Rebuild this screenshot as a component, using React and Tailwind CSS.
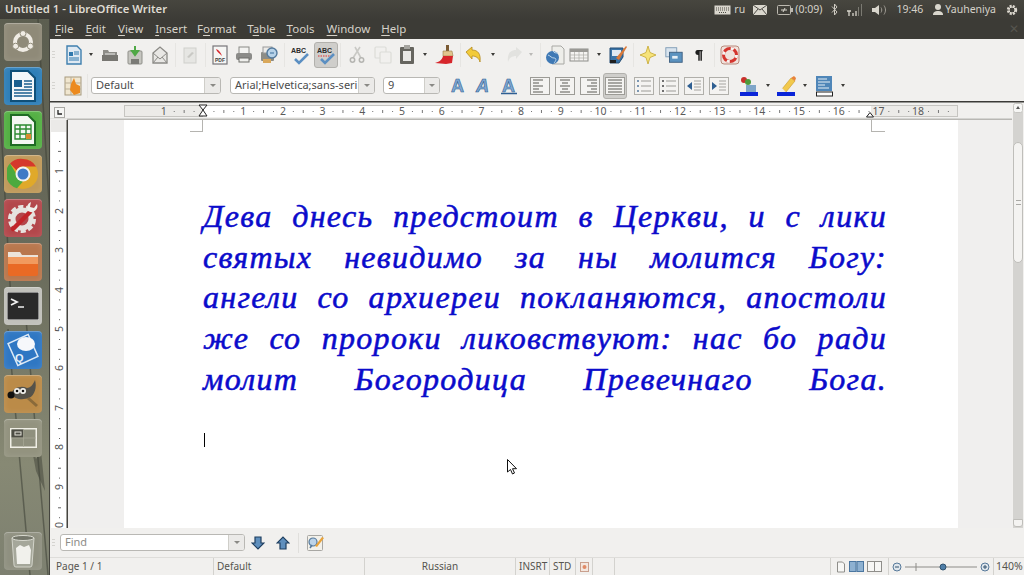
import React from "react";

const UI = "font-['Noto_Sans','Open_Sans',sans-serif]";

/* ================= TOOLBAR ICONS ================= */
const Svg = ({ children, s = 22, vb = 22 }) => (
  <svg width={s} height={s} viewBox={`0 0 ${vb} ${vb}`} fill="none">{children}</svg>
);

const DocNew = () => (
  <Svg>
    <path d="M4 2h10l4 4v14H4z" fill="#dfe9f2" stroke="#3f7fae" strokeWidth="1.4" />
    <rect x="6" y="8" width="4" height="4" fill="#2f78ad" />
    <path d="M11 8h5M11 10h5M6 14h10M6 16h10" stroke="#2f78ad" />
  </Svg>
);
const Open = () => (
  <Svg>
    <path d="M4 6h5l1 2h8v4H4z" fill="#8e8d88" />
    <path d="M3 11h16v6H3z" fill="#777671" />
    <path d="M6 10h10" stroke="#e8e8e6" />
  </Svg>
);
const Save = () => (
  <Svg>
    <rect x="4" y="7" width="14" height="13" rx="1" fill="#c6c6c0" stroke="#8f8f89" />
    <rect x="7" y="15" width="8" height="5" fill="#7b7b76" />
    <path d="M11 2v8M8 7l3 4 3-4z" stroke="#4fa845" strokeWidth="2" fill="#4fa845" />
  </Svg>
);
const Mail = () => (
  <Svg>
    <path d="M4 9l7-6 7 6v10H4z" fill="#e8e7e4" stroke="#8b8a86" strokeWidth="1.3" />
    <path d="M4 9l7 6 7-6M4 19l5-6M18 19l-5-6" stroke="#8b8a86" />
  </Svg>
);
const EditDoc = () => (
  <Svg>
    <rect x="5" y="4" width="12" height="15" fill="#e6e6e3" stroke="#cfcfcb" />
    <path d="M8 13l5-5 2 1-5 5z" fill="#c9c9c5" />
  </Svg>
);
const Pdf = () => (
  <Svg>
    <rect x="4" y="2" width="14" height="18" fill="#f6f6f4" stroke="#77767a" strokeWidth="1.2" />
    <path d="M7 5c3 1 5 4 6 7-3-3-5-4-6-7z" fill="#d8242a" />
    <text x="6" y="18" fontSize="5" fontWeight="700" fill="#444" fontFamily="Liberation Sans">PDF</text>
  </Svg>
);
const Print = () => (
  <Svg>
    <rect x="6" y="3" width="10" height="7" fill="#f3f3f1" stroke="#8a8a86" />
    <rect x="3" y="9" width="16" height="7" rx="2" fill="#8b8b88" />
    <rect x="6" y="14" width="10" height="4" fill="#efefec" stroke="#6f6f6b" />
  </Svg>
);
const Preview = () => (
  <Svg>
    <rect x="3" y="8" width="13" height="9" rx="1" fill="#8c8c86" />
    <rect x="5" y="3" width="9" height="6" fill="#ecebe8" stroke="#999" />
    <rect x="5" y="15" width="8" height="4" fill="#d9a85b" />
    <circle cx="14" cy="9" r="5" fill="#b7d2e8" stroke="#53799c" strokeWidth="1.4" />
    <path d="M12 9h4" stroke="#3a6f9d" />
  </Svg>
);
const Spell = ({ red }) => (
  <Svg>
    <text x="2" y="9" fontSize="7" fontWeight="700" fill="#2b2b2b" fontFamily="Liberation Sans">ABC</text>
    {red && <path d="M3 12h15" stroke="#d33" strokeWidth="1.2" strokeDasharray="1.5 1" />}
    <path d="M6 15l4 4 9-9" stroke="#5b8fc2" strokeWidth="2.6" />
  </Svg>
);
const Cut = () => (
  <Svg>
    <path d="M7 14L14 3M15 14L9 3" stroke="#c9c9c5" strokeWidth="1.6" />
    <circle cx="6.500" cy="16" r="2.200" stroke="#b5b5b1" strokeWidth="1.500" />
    <circle cx="15.500" cy="16" r="2.200" stroke="#b5b5b1" strokeWidth="1.500" />
  </Svg>
);
const Copy = () => (
  <Svg>
    <rect x="3" y="3" width="11" height="11" rx="1" stroke="#dcdcd8" strokeWidth="1.2" fill="#f1f0ee" />
    <rect x="8" y="8" width="11" height="11" rx="1" stroke="#dcdcd8" strokeWidth="1.2" fill="#f1f0ee" />
  </Svg>
);
const Paste = () => (
  <Svg>
    <rect x="4" y="3" width="14" height="17" rx="1" fill="#66655f" />
    <rect x="7" y="7" width="8" height="10" fill="#e9e8e5" />
    <rect x="8" y="1" width="6" height="4" fill="#a5a49f" />
  </Svg>
);
const Brush = () => (
  <Svg>
    <rect x="12" y="1" width="3" height="7" fill="#7a5a33" />
    <path d="M9 7h9l1 5H9z" fill="#e2c58e" stroke="#9b7d48" strokeWidth=".6" />
    <path d="M9 12h10l-1 7-6 1-11-1c4-1 7-3 8-7z" fill="#d7262b" />
  </Svg>
);
const Undo = () => (
  <Svg>
    <path d="M3 8l6-5v3c6 0 9 4 8 12-1-4-4-6-8-6v3z" fill="#f2cb3a" stroke="#b58a1d" strokeWidth=".8" />
  </Svg>
);
const Redo = () => (
  <Svg>
    <path d="M19 8l-6-5v3C7 6 4 10 5 18c1-4 4-6 8-6v3z" fill="#e2e2df" />
  </Svg>
);
const Link = () => (
  <Svg>
    <path d="M8 2h9l3 3v15H8z" fill="#eeeeea" stroke="#a8a8a4" />
    <circle cx="8.5" cy="13.5" r="6.5" fill="#3f79b5" />
    <path d="M4 11c3 1 3 3 6 3s2 3 0 5M9 7c1 2 3 2 5 2" stroke="#bcd5ea" />
  </Svg>
);
const Table = () => (
  <Svg>
    <rect x="2" y="5" width="18" height="12" fill="#f4f3f1" stroke="#8e8d89" />
    <rect x="2" y="5" width="18" height="3" fill="#9a9995" />
    <path d="M6.500 8v9M11 8v9M15.500 8v9M2 11h18M2 14h18" stroke="#adaca8" strokeWidth=".7" />
  </Svg>
);
const Draw = () => (
  <Svg>
    <path d="M3 4h13v9l-4 6H3z" fill="#3a74a8" stroke="#244d74" />
    <path d="M5 6h9v6H5z" fill="#dfe9f2" />
    <path d="M9 14L19 2l1 1-8 13z" fill="#d9793a" />
    <path d="M3 16h6v3H3z" fill="#1f1f1f" />
  </Svg>
);
const Nav = () => (
  <Svg>
    <path d="M11 2l2 6.500L19 11l-6 2.500L11 20l-2-6.500L3 11l6-2.500z" fill="#f6e37a" stroke="#c4a62e" strokeWidth=".8" />
  </Svg>
);
const Gallery = () => (
  <Svg s={20} vb={22}>
    <rect x="2" y="3" width="12" height="10" fill="#d9e4ee" stroke="#7d9ab5" />
    <rect x="6" y="8" width="14" height="11" fill="#5b92bf" stroke="#3d5f80" />
    <rect x="9" y="12" width="6" height="3" fill="#e8f0f6" />
  </Svg>
);
const Pilcrow = () => (
  <Svg s={16} vb={22}>
    <path d="M9 4h7v2h-1v13h-2V6h-1v13h-2v-8c-3 0-4-2-4-3.500S7 4 9 4z" fill="#1e1e1e" />
  </Svg>
);
const Help = () => (
  <Svg>
    <rect x="2" y="2" width="18" height="18" rx="3" fill="#f0e2dc" stroke="#b98a7c" />
    <circle cx="11" cy="11" r="6.500" stroke="#d4352e" strokeWidth="3" />
    <circle cx="11" cy="11" r="6.500" stroke="#f5f5f3" strokeWidth="3" strokeDasharray="3 7.200" />
  </Svg>
);
const StyleIcon = () => (
  <Svg>
    <rect x="3" y="2" width="16" height="18" fill="#f0e6cf" stroke="#a79a7f" />
    <path d="M3 8h16M3 14h16M9 2v18" stroke="#b9ad95" />
    <path d="M9 9l3-6 2 6 4 2v7l-6 2-4-5z" fill="#ec8a1e" />
  </Svg>
);
const LetterA = ({ kind }) => (
  <svg width="20" height="18" viewBox="0 0 20 18">
    <text
      x={kind === "u" ? 3 : 2}
      y="14.500"
      fontSize="18"
      fontWeight="700"
      fontStyle={kind === "i" ? "italic" : "normal"}
      fontFamily="Liberation Sans"
      fill="#7fa8d2"
      stroke="#2f5f92"
      strokeWidth=".6"
    >
      A
    </text>
    {kind === "u" && <path d="M2 16.500h16" stroke="#2f5f92" strokeWidth="1.500" />}
  </svg>
);
const Align = ({ k }) => {
  const rows = [5, 8, 11, 14, 17];
  const line = (i) => {
    if (k === "j") return [4, 18];
    const w = i % 2 ? 6 : 10;
    if (k === "l") return [4, 4 + w];
    if (k === "r") return [18 - w, 18];
    return [11 - w / 2, 11 + w / 2];
  };
  return (
    <Svg>
      <rect x="1.500" y="2.500" width="19" height="17" fill="#f4f3f1" stroke="#9c9b96" />
      {rows.map((y, i) => {
        const [a, b] = line(i);
        return <path key={y} d={`M${a} ${y}H${b}`} stroke="#7d7c78" strokeWidth="1.300" />;
      })}
    </Svg>
  );
};
const ListIcon = ({ k }) => (
  <Svg>
    <rect x="1.500" y="2.500" width="19" height="17" fill="#f4f3f1" stroke="#b0afaa" />
    {[6, 11, 16].map((y) => (
      <g key={y}>
        <path d={`M4 ${y}h2`} stroke={k === "n" ? "#55799c" : "#444"} strokeWidth="1.400" />
        <path d={`M8 ${y}h10`} stroke="#9c9b97" />
      </g>
    ))}
  </Svg>
);
const Indent = ({ k }) => (
  <Svg>
    <rect x="1.500" y="2.500" width="19" height="17" fill="#f4f3f1" stroke="#b0afaa" />
    <path d={k === "in" ? "M4 7l5 4-5 4z" : "M9 7l-5 4 5 4z"} fill="#2f5f92" />
    <path d="M11 6h7M11 9h7M11 12h7M11 15h7" stroke="#a5a4a0" />
  </Svg>
);
const CharColor = () => (
  <Svg>
    <circle cx="6" cy="5" r="3" fill="#c9302c" />
    <circle cx="10" cy="7" r="3" fill="#4e9a3c" />
    <path d="M8 10h10v7H8z" fill="#7fa6c9" />
    <rect x="2" y="17" width="18" height="4" fill="#0a25d8" />
  </Svg>
);
const Highlight = () => (
  <Svg>
    <path d="M7 14L16 3l4 3-9 11z" fill="#f2c94c" stroke="#c79a2a" strokeWidth=".6" />
    <path d="M16 3l4 3 1-3-2-2z" fill="#e8833a" />
    <path d="M4 16l3-3 4 4z" fill="#eee" />
    <rect x="2" y="17" width="18" height="4" fill="#0a25d8" />
  </Svg>
);
const ParaBg = () => (
  <Svg>
    <rect x="3" y="1" width="16" height="15" fill="#4f86b8" />
    <path d="M5 4h9M5 7h12M5 10h7M5 13h11" stroke="#e8f0f6" />
    <rect x="3.500" y="17" width="16" height="4" fill="#fff" stroke="#222" />
  </Svg>
);

const Caret = () => (
  <span className="w-2 h-4 flex items-center justify-center">
    <span className="w-0 h-0 border-x-[2.5px] border-t-[3px] border-x-transparent border-t-[#3c3b37]" />
  </span>
);
const Slot = ({ ml = "", active, children }) => (
  <span
    className={`${ml} w-6 h-[26px] flex items-center justify-center shrink-0 rounded-[3px] ${
      active ? "bg-[#cfcecb] border border-[#b2b1ad]" : ""
    }`}
  >
    {children}
  </span>
);
const Sep = ({ ml = "" }) => <span className={`${ml} w-px h-6 bg-[#e6e5e2] shrink-0`} />;
const Grip = () => (
  <span className="ml-[2px] w-[3px] flex flex-col gap-[2px] shrink-0">
    <span className="h-px bg-[#d5d4d0]" />
    <span className="h-px bg-[#d5d4d0]" />
    <span className="h-px bg-[#d5d4d0]" />
  </span>
);

const Combo = ({ text, className, textClass = "text-[#4c4c4c]", btn = "w-4" }) => (
  <div className={`${className} h-[17px] flex bg-white border border-[#b9b8b4] rounded-[3px] overflow-hidden shrink-0`}>
    <span className={`flex-1 pl-1 text-[11px] leading-[14px] whitespace-nowrap ${textClass}`}>{text}</span>
    <span className={`${btn} bg-[#ebeae8] border-l border-[#cfcec9] flex items-center justify-center shrink-0`}>
      <span className="w-0 h-0 border-x-[3px] border-t-[3px] border-x-transparent border-t-[#8a8985]" />
    </span>
  </div>
);

function ToolbarOne() {
  return (
    <div className="h-[31px] flex items-center bg-[#f1f0ee]">
      <Grip />
      <Slot ml="ml-[7px]"><DocNew /></Slot>
      <span className="ml-px"><Caret /></span>
      <Slot ml="ml-[3px]"><Open /></Slot>
      <Slot ml="ml-px"><Save /></Slot>
      <Slot ml="ml-px"><Mail /></Slot>
      <Sep ml="ml-[3px]" />
      <Slot ml="ml-[2px]"><EditDoc /></Slot>
      <Sep ml="ml-[3px]" />
      <Slot ml="ml-[2px]"><Pdf /></Slot>
      <Slot><Print /></Slot>
      <Slot ml="ml-px"><Preview /></Slot>
      <Sep ml="ml-[3px]" />
      <Slot ml="ml-[3px]"><Spell /></Slot>
      <Slot ml="ml-[2px]" active><Spell red /></Slot>
      <Sep ml="ml-[2px]" />
      <Slot ml="ml-[4px]"><Cut /></Slot>
      <Slot ml="ml-[2px]"><Copy /></Slot>
      <Slot><Paste /></Slot>
      <span className="ml-[2px]"><Caret /></span>
      <Slot ml="ml-[4px]"><Brush /></Slot>
      <Sep ml="ml-[3px]" />
      <Slot ml="ml-px"><Undo /></Slot>
      <span className="ml-[3px]"><Caret /></span>
      <Slot ml="ml-[5px]"><Redo /></Slot>
      <span className="ml-px opacity-30"><Caret /></span>
      <Sep ml="ml-[5px]" />
      <Slot ml="ml-[2px]"><Link /></Slot>
      <Slot><Table /></Slot>
      <span className="ml-[4px]"><Caret /></span>
      <Slot ml="ml-[3px]"><Draw /></Slot>
      <Sep ml="ml-[3px]" />
      <Slot ml="ml-[2px]"><Nav /></Slot>
      <Slot ml="ml-[2px]"><Gallery /></Slot>
      <Slot ml="ml-px"><Pilcrow /></Slot>
      <Sep ml="ml-[3px]" />
      <Slot ml="ml-[3px]"><Help /></Slot>
    </div>
  );
}

function ToolbarTwo() {
  return (
    <div className="h-[31px] flex items-center bg-[#f1f0ee]">
      <Grip />
      <Slot ml="ml-[6px]"><StyleIcon /></Slot>
      <Sep ml="ml-[2px]" />
      <Combo text="Default" className="ml-[3px] w-[130px]" />
      <Combo text="Arial;Helvetica;sans-seri" className="ml-[9px] w-[145px]" />
      <Combo text="9" className="ml-[8px] w-[57px]" btn="w-[15px]" />
      <Slot ml="ml-[7px]"><LetterA /></Slot>
      <Slot ml="ml-px"><LetterA kind="i" /></Slot>
      <Slot ml="ml-px"><LetterA kind="u" /></Slot>
      <Slot ml="ml-[7px]"><Align k="l" /></Slot>
      <Slot ml="ml-px"><Align k="c" /></Slot>
      <Slot ml="ml-px"><Align k="r" /></Slot>
      <Slot ml="ml-px" active><Align k="j" /></Slot>
      <Slot ml="ml-[5px]"><ListIcon k="n" /></Slot>
      <Slot ml="ml-px"><ListIcon /></Slot>
      <Slot ml="ml-px"><Indent k="out" /></Slot>
      <Slot ml="ml-px"><Indent k="in" /></Slot>
      <Slot ml="ml-[6px]"><CharColor /></Slot>
      <span className="ml-[3px]"><Caret /></span>
      <Slot ml="ml-[2px]"><Highlight /></Slot>
      <span className="ml-[3px]"><Caret /></span>
      <Slot ml="ml-[3px]"><ParaBg /></Slot>
      <span className="ml-[3px]"><Caret /></span>
    </div>
  );
}

/* ================= RULERS ================= */
const HRuler = () => {
  const ox = 203.5 - 50;
  const step = 39.7;
  const marks = [];
  for (let n = -2; n <= 19; n++) {
    const x = ox + n * step;
    if (x < 78 || x > 905) continue;
    [0.25, 0.5, 0.75].forEach((f) => {
      const tx = x + f * step;
      if (tx > 905) return;
      marks.push(
        <rect key={`${n}${f}`} x={tx} y={f === 0.5 ? 9 : 10} width="1" height={f === 0.5 ? 3 : 1} fill="#777" />
      );
    });
    if (n !== 0) {
      marks.push(<text key={n} x={x} y="14" fontSize="10.500" textAnchor="middle" fill="#5a5a5a" fontFamily="Noto Sans">{Math.abs(n)}</text>);
    }
  }
  return (
    <svg width="974" height="19" className="block">
      <rect width="974" height="19" fill="#f1f0ee" />
      <rect x="0" y="0" width="974" height="1.500" fill="#3b3a37" />
      <rect x="4.500" y="6.500" width="10" height="10" fill="#f6f6f4" stroke="#a9a8a4" />
      <path d="M8 9v4h4" stroke="#222" strokeWidth="1.300" fill="none" />
      <rect x="74.500" y="4.500" width="833" height="11" fill="#ecebe8" stroke="#c6c5c1" />
      <rect x="153" y="5" width="668" height="11" fill="#fff" />
      {marks}
      <path d="M149 4h8l-4 5 4 6h-8l4-6z" fill="#fff" stroke="#222" />
      <path d="M816.500 16h7l-3.500-4.500z" fill="#fff" stroke="#222" />
      <rect x="0" y="17.500" width="962" height="1.500" fill="#b8b7b3" />
      <rect x="0" y="17.500" width="17" height="1.500" fill="#f1f0ee" />
      <rect x="963" y="11" width="10" height="8" fill="#d4d3d0" />
      <rect x="963.500" y="2.500" width="9" height="9" rx="2" fill="#f6f6f4" stroke="#c7c6c2" />
      <path d="M966 8l2-3 2 3z" fill="#555" />
    </svg>
  );
};

const VRuler = () => {
  const nums = [
    [1, 51],
    [2, 91],
    [3, 130],
    [4, 170],
    [5, 209],
    [6, 248],
    [7, 288],
    [8, 327],
    [9, 367],
    [0, 405],
  ];
  const ticks = [];
  for (let y = 21; y < 408; y += 9.9) ticks.push(y);
  return (
    <svg width="18" height="408" className="block shrink-0">
      <rect x="1" width="15.500" height="408" fill="#fff" />
      <rect x="1" width="15.500" height="12" fill="#ebeae8" />
      <rect x="16.500" width="1.500" height="408" fill="#45443f" />
      {ticks.map((y, i) => (
        <rect key={i} x={i % 4 === 1 ? 8 : 9} y={y} width={i % 4 === 1 ? 3 : 1} height="1" fill="#666" />
      ))}
      {nums.map(([n, y]) => (
        <g key={y}>
          <rect x="3" y={y - 5} width="12" height="10" fill="#fff" />
          <text transform={`translate(13 ${y}) rotate(-90)`} fontSize="10.500" textAnchor="middle" fill="#555" fontFamily="Noto Sans">{n}</text>
        </g>
      ))}
    </svg>
  );
};

const lines = [
  "Дева днесь предстоит в Церкви, и с лики",
  "святых невидимо за ны молится Богу:",
  "ангели со архиереи покланяются, апостоли",
  "же со пророки ликовствуют: нас бо ради",
  "молит Богородица Превечнаго Бога.",
];

function Page() {
  return (
    <div className="ml-[56px] w-[834px] h-full bg-white flex flex-col relative">
      <div className="flex justify-between pl-[66px] pr-[73px]">
        <span className="w-[13px] h-[12px] border-r border-b border-[#b5b4b0]" />
        <span className="w-[14px] h-[12px] border-l border-b border-[#b5b4b0]" />
      </div>
      <div className="pl-[79px] w-[763px] mt-[64px] font-['Liberation_Serif',serif] italic text-[#0b0bcb] text-[32px] tracking-[1.3px] leading-[40.7px] [-webkit-text-stroke:0.55px_#0b0bcb]">
        {lines.map((l) => (
          <div key={l} className="text-justify [text-align-last:justify] whitespace-normal">{l}</div>
        ))}
      </div>
      <div className="ml-[80px] mt-[33px] w-px h-[14px] bg-black" />
    </div>
  );
}

/* ================= LAUNCHER ================= */
const Tile = ({ bg, children }) => (
  <div className={`w-[38px] h-[38px] rounded-[4px] flex items-center justify-center shrink-0 shadow-[inset_0_1px_0_rgba(255,255,255,0.25),inset_0_0_6px_rgba(255,255,255,0.12)] ${bg}`}>{children}</div>
);

const launcherIcons = [
  {
    bg: "bg-[#8f8a78]",
    el: (
      <svg width="24" height="24" viewBox="0 0 24 24">
        <circle cx="12" cy="12" r="8" fill="none" stroke="#f0ece4" strokeWidth="4" />
        <circle cx="12" cy="3.500" r="3" fill="#f0ece4" stroke="#8f8a78" />
        <circle cx="4.600" cy="16.200" r="3" fill="#f0ece4" stroke="#8f8a78" />
        <circle cx="19.400" cy="16.200" r="3" fill="#f0ece4" stroke="#8f8a78" />
      </svg>
    ),
  },
  {
    bg: "bg-[#2f7fb8]",
    el: (
      <svg width="30" height="32" viewBox="0 0 30 32">
        <path d="M3 1h17l7 7v23H3z" fill="#f4f7f9" stroke="#0f4f78" strokeWidth="2" />
        <rect x="6" y="10" width="8" height="7" fill="#1a5f8f" />
        <path d="M16 11h8M16 14h8M16 17h8M6 20h18M6 23h18M6 26h18" stroke="#1a5f8f" strokeWidth="1.500" />
      </svg>
    ),
  },
  {
    bg: "bg-[#54b044]",
    el: (
      <svg width="30" height="32" viewBox="0 0 30 32">
        <path d="M3 1h17l7 7v23H3z" fill="#f4f7f2" stroke="#1f6b24" strokeWidth="2" />
        <path d="M7 11h16v14H7zM7 15h16M7 20h16M12 11v14M18 11v14" stroke="#2c8a32" strokeWidth="1.400" fill="none" />
        <rect x="18" y="20" width="5" height="5" fill="#d98b2e" />
      </svg>
    ),
  },
  {
    bg: "bg-[#c09a5a]",
    el: (
      <svg width="32" height="32" viewBox="0 0 32 32">
        <circle cx="16" cy="16" r="15" fill="#e0a92a" />
        <path d="M16 1a15 15 0 0 1 13 7.500H16a7.500 7.500 0 0 0-6.500 3.800L3 5.500A15 15 0 0 1 16 1z" fill="#d5382c" />
        <path d="M3 5.500l6.500 10.800a7.500 7.500 0 0 0 6.500 7.200L10 30.200A15 15 0 0 1 3 5.500z" fill="#4caa3e" />
        <circle cx="16" cy="16" r="7.500" fill="#f2f2f2" />
        <circle cx="16" cy="16" r="5.500" fill="#3f79c6" />
      </svg>
    ),
  },
  {
    bg: "bg-[#b3474b]",
    el: (
      <svg width="34" height="34" viewBox="0 0 34 34">
        <circle cx="16" cy="18" r="12" fill="none" stroke="#e6e3df" strokeWidth="4" strokeDasharray="5 2.500" />
        <circle cx="16" cy="18" r="9" fill="none" stroke="#e6e3df" strokeWidth="5" />
        <path d="M7 28L24 11" stroke="#c0262a" strokeWidth="4.500" strokeLinecap="round" />
        <path d="M22 10a6 6 0 0 0 9-7l-3 4-4-1 1-5a6 6 0 0 0-3 9z" fill="#eeeeea" />
      </svg>
    ),
  },
  {
    bg: "bg-[#b9774d]",
    el: (
      <svg width="34" height="30" viewBox="0 0 34 30">
        <path d="M2 5h12l2 3h16v4H2z" fill="#ece4da" />
        <path d="M2 10h30v17a2 2 0 0 1-2 2H4a2 2 0 0 1-2-2z" fill="#e96a25" />
        <path d="M2 10h30v7H2z" fill="#f19a5e" />
      </svg>
    ),
  },
  {
    bg: "bg-[#c0c0ba]",
    el: (
      <svg width="32" height="28" viewBox="0 0 32 28">
        <rect width="32" height="28" rx="1" fill="#2a2a2a" stroke="#eee" />
        <path d="M4 7l6 3-6 3" stroke="#f1f1f1" strokeWidth="1.800" fill="none" />
        <path d="M11 15h6" stroke="#f1f1f1" strokeWidth="1.500" />
      </svg>
    ),
  },
  {
    bg: "bg-[#2f77c3]",
    el: (
      <svg width="34" height="34" viewBox="0 0 34 34">
        <rect x="6" y="5" width="22" height="24" transform="rotate(-24 17 17)" fill="none" stroke="#dce9f6" strokeWidth="1.500" />
        <ellipse cx="20" cy="11" rx="9" ry="7" fill="#f6f8fb" />
        <text x="9" y="29" fontSize="11" fontWeight="700" fill="#e8f0f8" fontFamily="Liberation Sans">Q</text>
      </svg>
    ),
  },
  {
    bg: "bg-[#bb8b48]",
    el: (
      <svg width="34" height="32" viewBox="0 0 34 32">
        <path d="M5 16c2-6 10-9 16-6 3 0 6-3 8-8 2 7 0 15-6 18-6 2-14 2-18-4z" fill="#55524a" />
        <circle cx="5" cy="17" r="3.500" fill="#111" />
        <circle cx="11" cy="13" r="3" fill="#f2f2ee" />
        <circle cx="17" cy="13" r="3" fill="#f2f2ee" />
        <circle cx="11" cy="13" r="1.300" fill="#111" />
        <circle cx="17" cy="13" r="1.300" fill="#111" />
        <path d="M22 20l9 8" stroke="#8a6a3a" strokeWidth="3" />
      </svg>
    ),
  },
  {
    bg: "bg-[#93937f]",
    el: (
      <svg width="27" height="20" viewBox="0 0 27 20">
        <rect x=".75" y=".75" width="25.500" height="18.500" fill="#8f907e" stroke="#f0efe6" strokeWidth="1.500" />
        <rect x="1.500" y="1.500" width="12" height="8" fill="#4d4d44" />
        <rect x="5" y="4" width="6" height="3" fill="none" stroke="#e5e4da" />
        <path d="M13.500 10v9M13.500 1v9M1 10h25" stroke="#a9aa98" strokeWidth=".7" />
      </svg>
    ),
  },
];

function Launcher() {
  return (
    <div className="w-[50px] shrink-0 relative bg-[linear-gradient(180deg,#5c5e50_0%,#6a6c5c_45%,#878974_80%,#7d8070_100%)] border-r border-[#44443e]">
      {/* wallpaper streaks */}
      <svg className="absolute inset-0" width="50" height="556">
        <path d="M38 0L50 200M0 90L12 300M8 310L30 556M26 300L48 556" stroke="#3c3f35" strokeWidth="1.500" opacity=".55" />
        <path d="M30 420l6 20 5-8 4 40-9-20z" fill="#3f4238" opacity=".5" />
      </svg>
      <div className="relative h-full flex flex-col items-center pt-[4px] pb-[5px] gap-[6px] pr-[3px]">
        {launcherIcons.map((it, i) => (
          <Tile key={i} bg={it.bg}>{it.el}</Tile>
        ))}
        <div className="mt-auto">
          <Tile bg="bg-[#8f9080]">
            <svg width="26" height="34" viewBox="0 0 26 34">
              <path d="M2 4h22l-2 27a2 2 0 0 1-2 2H6a2 2 0 0 1-2-2z" fill="#a5a79a" stroke="#d3d4ca" />
              <ellipse cx="13" cy="4" rx="11" ry="2.500" fill="#74766a" stroke="#d8d9cf" />
              <path d="M6 14l4-3 4 2 5-2 2 5-1 14H7z" fill="#f1f1ec" />
            </svg>
          </Tile>
        </div>
      </div>
    </div>
  );
}

/* ================= TOP PANEL ================= */
function TopBar() {
  return (
    <div className={`${UI} h-[19px] flex items-center pl-[5px] bg-[linear-gradient(180deg,#47463f,#3c3b36)] text-[#dfdbd2] shrink-0`}>
      <span className="text-[11.3px] font-semibold whitespace-nowrap">Untitled 1 - LibreOffice Writer</span>
      <div className="ml-auto flex items-center text-[10.5px] text-[#d6d2c9] whitespace-nowrap">
        <svg width="17" height="10" viewBox="0 0 17 10"><rect x=".5" y=".5" width="16" height="9" fill="#d9d6cd" /><path d="M2 3h13M2 5h13M5 7.500h7" stroke="#4c4b45" strokeDasharray="1 1" /></svg>
        <span className="ml-[3px] w-[19px]">ru</span>
        <svg width="14" height="10" viewBox="0 0 14 10"><rect width="14" height="10" fill="#d9d6cd" /><path d="M0 0l7 5 7-5M0 10l5-6M14 10L9 4" stroke="#4c4b45" fill="none" /></svg>
        <svg className="ml-[10px]" width="16" height="10" viewBox="0 0 16 10"><rect x=".5" y=".5" width="13" height="9" rx="1" fill="none" stroke="#bdb9b0" /><rect x="14" y="3" width="2" height="4" fill="#bdb9b0" /><path d="M4 5h6M8 3l-2 4" stroke="#d9d6cd" /></svg>
        <span className="ml-[2px]">(0:09)</span>
        <svg className="ml-[8px]" width="7" height="13" viewBox="0 0 7 13"><path d="M1 3.500l5 5.500-2.500 3V1L6 4 1 9.500" stroke="#cfcbc2" fill="none" /></svg>
        <svg className="ml-[9px]" width="15" height="12" viewBox="0 0 15 12"><path d="M0 7h4M2 7v5M6 12V9M9 12V7" stroke="#d9d6cd" strokeWidth="1.300" /><path d="M11.500 12V3M14.500 12V0" stroke="#7b7a72" /></svg>
        <svg className="ml-[10px]" width="15" height="12" viewBox="0 0 15 12"><path d="M0 4h3l4-3v10L3 8H0z" fill="#d9d6cd" /><path d="M9 3.500c1 1.500 1 3.500 0 5M12 1.500c2 3 2 6 0 9" stroke="#9e9b93" fill="none" /></svg>
        <span className="ml-[10px]">19:46</span>
        <svg className="ml-[10px]" width="10" height="11" viewBox="0 0 10 11"><circle cx="5" cy="3" r="3" fill="#d9d6cd" /><path d="M0 11c0-3 2-4 5-4s5 1 5 4z" fill="#d9d6cd" /></svg>
        <span className="ml-[2px]">Yauheniya</span>
        <svg className="ml-[10px] mr-[6px]" width="12" height="12" viewBox="0 0 12 12"><circle cx="6" cy="6" r="4" fill="none" stroke="#dcd8cf" strokeWidth="2.400" strokeDasharray="2 1.200" /><circle cx="6" cy="6" r="3" fill="none" stroke="#dcd8cf" /></svg>
      </div>
    </div>
  );
}

const menu = [
  ["", "F", "ile", "ml-[5px]"],
  ["", "E", "dit", "ml-[12px]"],
  ["", "V", "iew", "ml-[12px]"],
  ["", "I", "nsert", "ml-[12px]"],
  ["F", "o", "rmat", "ml-[10px]"],
  ["T", "a", "ble", "ml-[11px]"],
  ["", "T", "ools", "ml-[11px]"],
  ["", "W", "indow", "ml-[12px]"],
  ["", "H", "elp", "ml-[11px]"],
];

function MenuBar() {
  return (
    <div className="h-[20px] flex items-center pb-px bg-[#3c3b36] text-[#d6d2c9] text-[11.5px]">
      {menu.map(([a, u, b, ml]) => (
        <span key={u + b} className={ml}>
          {a}<u className="underline-offset-2">{u}</u>{b}
        </span>
      ))}
      <span className="ml-auto mr-[5px] text-[12px] leading-none text-[#56554f]">✕</span>
    </div>
  );
}

/* ================= FIND + STATUS ================= */
function FindBar() {
  return (
    <div className="h-[29px] flex items-center bg-[#f1f0ee]">
      <Grip />
      <Combo text="Find" textClass="text-[#8d8c88]" className="ml-[5px] w-[185px]" btn="w-[16px]" />
      <svg className="ml-[6px]" width="14" height="14" viewBox="0 0 14 14"><path d="M4 1h6v6h3l-6 6-6-6h3z" fill="#5f8fbd" stroke="#1f3f60" strokeWidth="1.200" /></svg>
      <svg className="ml-[11px]" width="14" height="14" viewBox="0 0 14 14"><path d="M4 13h6V7h3L7 1 1 7h3z" fill="#5f8fbd" stroke="#1f3f60" strokeWidth="1.200" /></svg>
      <span className="ml-[8px] w-px h-5 bg-[#e0dfdc]" />
      <svg className="ml-[7px]" width="18" height="18" viewBox="0 0 18 18">
        <rect x="1.500" y="1.500" width="15" height="15" rx="1" fill="#f3f1ea" stroke="#a8a7a3" />
        <circle cx="7" cy="8" r="4" fill="#bcd3e8" stroke="#55799c" strokeWidth="1.200" />
        <path d="M4 14l2-3" stroke="#55799c" strokeWidth="1.500" />
        <path d="M9 12l7-9 2 1-7 9z" fill="#e9a33a" />
      </svg>
    </div>
  );
}

const SBox = ({ className, children }) => (
  <div className={`${className} h-full flex items-center border-r border-[#d3d2ce] shrink-0 whitespace-nowrap`}>{children}</div>
);

function StatusBar() {
  return (
    <div className="h-[18px] flex bg-[#f1f0ee] text-[10px] text-[#55544f] border-t border-[#dedddA] overflow-hidden">
      <SBox className="w-[164px] pl-[6px]">Page 1 / 1</SBox>
      <SBox className="w-[151px] pl-[3px]">Default</SBox>
      <SBox className="w-[151px] justify-center">Russian</SBox>
      <SBox className="w-[34px] pl-[3px]">INSRT</SBox>
      <SBox className="w-[26px] pl-[3px]">STD</SBox>
      <SBox className="w-[17px] justify-center">
        <svg width="9" height="10" viewBox="0 0 9 10"><rect x=".5" y=".5" width="8" height="9" fill="#f4e7df" stroke="#c9a08e" /><circle cx="4.500" cy="5" r="2" fill="#e08a66" /></svg>
      </SBox>
      <SBox className="w-[22px]" />
      <SBox className="w-[216px]" />
      <SBox className="w-[58px] pl-[5px] gap-[3px]">
        <svg width="10" height="12" viewBox="0 0 10 12"><path d="M1.500 1h5l2 2v8h-7z" fill="#f7f7f5" stroke="#8f8e8a" /></svg>
        <svg width="15" height="11" viewBox="0 0 15 11"><rect x=".5" y=".5" width="6.500" height="10" fill="#8eb1d1" stroke="#4b76a0" /><rect x="8" y=".5" width="6.500" height="10" fill="#8eb1d1" stroke="#4b76a0" /></svg>
        <svg width="15" height="11" viewBox="0 0 15 11"><rect x=".5" y=".5" width="7" height="10" fill="#f7f7f5" stroke="#8f8e8a" /><rect x="7.500" y=".5" width="7" height="10" fill="#f7f7f5" stroke="#8f8e8a" /></svg>
      </SBox>
      <SBox className="w-[105px] pl-[2px]">
        <svg width="102" height="14" viewBox="0 0 102 14">
          <circle cx="6" cy="7" r="4" fill="#dfe6ec" stroke="#57799a" />
          <path d="M4 7h4" stroke="#33536f" />
          <path d="M14 7h72" stroke="#8d8c88" />
          <path d="M25 3v8" stroke="#8d8c88" />
          <circle cx="52" cy="7" r="3" fill="#4e7ea8" stroke="#2f526f" />
          <circle cx="94" cy="7" r="4" fill="#dfe6ec" stroke="#57799a" />
          <path d="M92 7h4M94 5v4" stroke="#33536f" />
        </svg>
      </SBox>
      <div className="pl-[2px] text-[10.5px] flex items-center">140%</div>
    </div>
  );
}

export default function App() {
  return (
    <div className={`${UI} w-[1024px] h-[575px] flex flex-col overflow-hidden relative bg-[#f1f0ee]`}>
      <TopBar />
      <div className="flex-1 flex min-h-0">
        <Launcher />
        <div className="flex-1 min-w-0 flex flex-col">
          <MenuBar />
          <ToolbarOne />
          <ToolbarTwo />
          <HRuler />
          <div className="h-[408px] flex">
            <VRuler />
            <div className="flex-1 bg-[#f0efee] min-w-0">
              <Page />
            </div>
            <div className="w-[12px] h-full bg-[#f1f0ee] flex flex-col">
              <div className="flex-1 mx-px bg-[#d4d3d0] flex flex-col pt-[22px] pb-[1px]">
                <div className="h-[121px] bg-[#f4f3f1] border border-[#bfbeba] rounded-[5px] flex items-center justify-center">
                  <span className="w-[5px] h-[5px] border-y border-[#a9a8a4]" />
                </div>
                <div className="mt-auto w-full h-[8px] bg-[#f4f3f1] border border-[#bfbeba] rounded-b-[3px]" />
              </div>
            </div>
          </div>
          <FindBar />
          <StatusBar />
        </div>
      </div>
      {/* mouse pointer */}
      <svg className="absolute left-[507px] top-[459px]" width="11" height="16" viewBox="0 0 11 16">
        <path d="M.5.500v12.500l3-2.500 2 4.500 2-1-2-4.300h4z" fill="#fff" stroke="#111" />
      </svg>
    </div>
  );
}
